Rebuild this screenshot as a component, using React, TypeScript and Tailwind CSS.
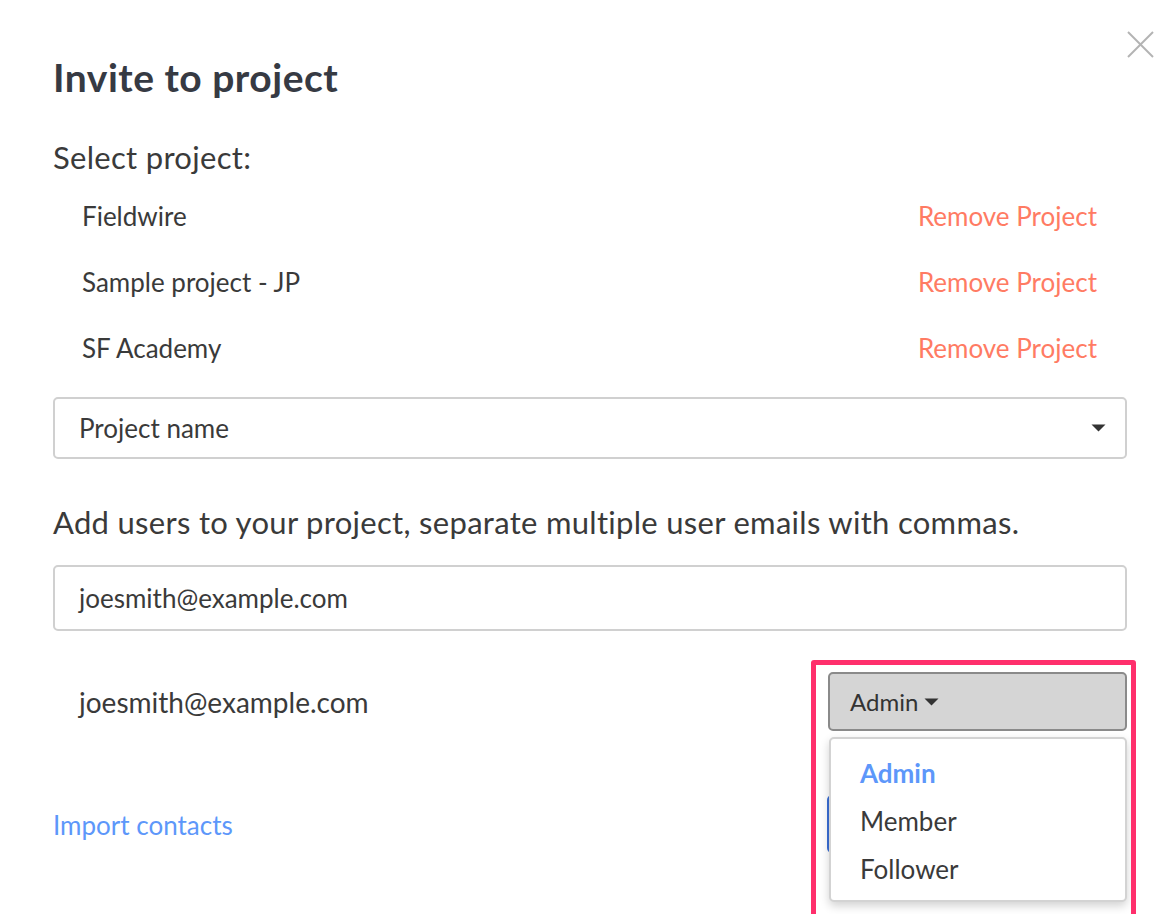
import React from 'react';

const projects = ['Fieldwire', 'Sample project - JP', 'SF Academy'];
const roles = ['Admin', 'Member', 'Follower'];

function Caret({ className = '' }: { className?: string }) {
  return (
    <svg viewBox="0 0 14 8" className={className} fill="currentColor">
      <path d="M0 0.5 H14 L7 7.5 Z" />
    </svg>
  );
}

export default function App() {
  return (
    <div
      className="relative h-[914px] w-[1174px] overflow-hidden bg-white text-[#3a3a3a]"
      style={{ fontFamily: 'Lato, "Open Sans", sans-serif' }}
    >
      {/* Close */}
      <button className="absolute left-[1127px] top-[31px] h-[27px] w-[27px] text-[#b3b3b3]">
        <svg viewBox="0 0 27 27" className="h-full w-full" stroke="currentColor" strokeWidth="2">
          <line x1="1" y1="1" x2="26" y2="26" />
          <line x1="26" y1="1" x2="1" y2="26" />
        </svg>
      </button>

      <div className="flex flex-col pl-[53px] pr-[47px] pt-[55px]">
        <h1 className="h-[44px] text-[39px] font-bold leading-[44px] tracking-[0.5px] text-[#363a43]">
          Invite to project
        </h1>

        <div className="mt-[38px] h-[40px] text-[31px] leading-[40px] tracking-[0.3px]">Select project:</div>

        <div className="mt-[6px] flex flex-col">
          {projects.map((p) => (
            <div key={p} className="flex h-[66px] items-center justify-between pl-[29px] pr-[30px] text-[26px]">
              <span>{p}</span>
              <span className="text-[#ff7b63]">Remove Project</span>
            </div>
          ))}
        </div>

        <div className="mt-[16px] flex h-[62px] items-center justify-between rounded-[5px] border-2 border-[#d0d0d0] pl-[24px] pr-[19px] text-[26px]">
          <span>Project name</span>
          <Caret className="h-[8px] w-[15px] text-[#333]" />
        </div>

        <div className="mt-[43px] h-[40px] text-[31px] leading-[40px] tracking-[0.3px]">
          Add users to your project, separate multiple user emails with commas.
        </div>

        <div className="mt-[23px] flex h-[66px] items-center rounded-[5px] border-2 border-[#d0d0d0] pl-[24px] text-[26px]">
          joesmith@example.com
        </div>

        <div className="mt-[41px] flex h-[59px] items-center justify-between pl-[26px] text-[28px]">
          <span>joesmith@example.com</span>
          <div className="relative">
            <button className="flex h-[59px] w-[299px] items-center gap-[6px] rounded-[5px] border-2 border-[#8a8a8a] bg-[#d5d5d5] pl-[20px] text-[24px] text-[#333]">
              Admin
              <Caret className="h-[8px] w-[15px] text-[#333]" />
            </button>

            {/* Role menu */}
            <div className="absolute left-px top-[65px] z-10 h-[165px] w-[298px] rounded-[5px] border-2 border-[#d3d3d3] bg-white pt-[10px] shadow-[0_4px_10px_rgba(0,0,0,0.18)]">
              {roles.map((r, i) => (
                <div
                  key={r}
                  className={`flex h-[48px] items-center pl-[29px] text-[26px] ${
                    i === 0 ? 'font-bold text-[#5d97fa]' : 'text-[#3a3a3a]'
                  }`}
                >
                  {r}
                </div>
              ))}
            </div>

            {/* Highlight */}
            <div className="pointer-events-none absolute left-[-17px] top-[-12px] z-20 h-[280px] w-[325px] rounded-[3px] border-[5px] border-[#ff2f6c]" />
          </div>
        </div>

        <div className="mt-[64px] flex h-[58px] items-center justify-between">
          <span className="pt-[3px] text-[26px] text-[#5d97fa]">Import contacts</span>
          {/* Send button, hidden under the open menu */}
          <button aria-label="Invite" className="h-[58px] w-[300px] rounded-[5px] bg-[#3a6fd6]" />
        </div>
      </div>
    </div>
  );
}
